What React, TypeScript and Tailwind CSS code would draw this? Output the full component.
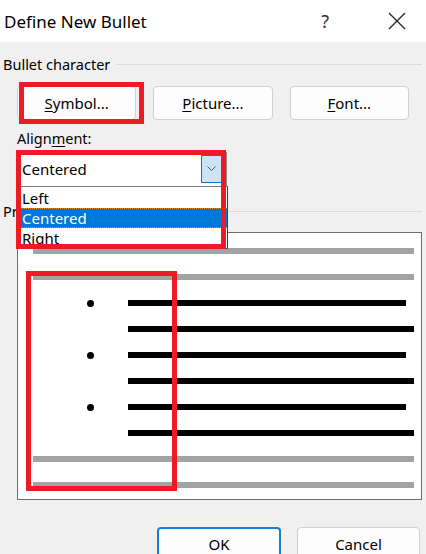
import React from 'react';

const font = "font-['Noto_Sans',sans-serif]";

const GroupHeader = ({ label }: { label: React.ReactNode }) => (
  <div className="flex items-center h-[20px]">
    <span className="pl-[3px] text-[14.5px] leading-[20px] text-black whitespace-nowrap">{label}</span>
    <div className="flex-1 h-px bg-[#dadada] ml-[7px] mr-[4px]"></div>
  </div>
);

const DialogButton = ({ children, primary }: { children: React.ReactNode; primary?: boolean }) => (
  <div
    className={
      primary
        ? 'w-[124px] h-[34px] rounded-[4px] border-2 border-[#1a7fd4] bg-[#fdfdfd] flex items-center justify-center text-[15px] text-black'
        : 'w-[123px] h-[34px] rounded-[4px] border border-[#d0d0d0] bg-[#fdfdfd] flex items-center justify-center text-[15px] text-black'
    }
  >
    {children}
  </div>
);

// one row of the preview: grey filler lines, or black text lines with optional bullet
const PreviewLine = ({ kind, bullet, short }: { kind: 'grey' | 'black'; bullet?: boolean; short?: boolean }) => {
  if (kind === 'grey') {
    return <div className="h-[6px] w-[381px] bg-[#a3a3a3]"></div>;
  }
  return (
    <div className="flex items-center h-[6px]">
      <div className="w-[95px] flex items-center">
        <div className="w-[54px]"></div>
        {bullet && <div className="w-[7px] h-[7px] rounded-full bg-black"></div>}
      </div>
      <div className={short ? 'h-[6px] w-[278px] bg-black' : 'h-[6px] w-[286px] bg-black'}></div>
    </div>
  );
};

export default function App() {
  return (
    <div className={`${font} relative w-[426px] h-[554px] overflow-hidden bg-[#f0f0f0] text-black`}>
      {/* Title bar */}
      <div className="h-[42px] bg-white flex items-center">
        <span className="pl-[4px] text-[17px] leading-none">Define New Bullet</span>
        <div className="flex-1"></div>
        <span className="text-[18px] leading-none text-[#333] mr-[59px]">?</span>
        <svg width="18" height="18" viewBox="0 0 18 18" className="mr-[20px]">
          <path d="M1 1 L17 17 M17 1 L1 17" stroke="#222" strokeWidth="1.3" fill="none" />
        </svg>
      </div>

      {/* Bullet character */}
      <div className="mt-[12px]">
        <GroupHeader label="Bullet character" />
      </div>
      <div className="flex gap-[17px] px-[17px] mt-[12px]">
        <DialogButton>
          <span className="underline underline-offset-2">S</span>ymbol...
        </DialogButton>
        <DialogButton>
          <span className="underline underline-offset-2">P</span>icture...
        </DialogButton>
        <DialogButton>
          <span className="underline underline-offset-2">F</span>ont...
        </DialogButton>
      </div>

      {/* Alignment */}
      <div className="mt-[8px] pl-[17px] text-[14.5px] leading-[20px]">
        Align<span className="underline underline-offset-2">m</span>ent:
      </div>
      <div className="ml-[17px] mt-[4px] w-[210px] h-[34px] bg-white border-x border-[#8a8a8a] flex items-center">
        <span className="pl-[4px] text-[15px] flex-1">Centered</span>
        <div className="w-[21px] h-[28px] mr-[4px] bg-[#cce4f7] border border-[#0078d7] flex items-center justify-center">
          <svg width="9" height="6" viewBox="0 0 9 6">
            <path d="M0.5 0.5 L4.5 4.5 L8.5 0.5" stroke="#555" strokeWidth="1" fill="none" />
          </svg>
        </div>
      </div>

      {/* Preview */}
      <div className="mt-[15px]">
        <GroupHeader label="Preview" />
      </div>
      <div className="ml-[17px] mt-[11px] w-[405px] h-[268px] bg-white border border-[#6d6d6d] pt-[15px] pl-[15px] flex flex-col gap-[20px]">
        <PreviewLine kind="grey" />
        <PreviewLine kind="grey" />
        <PreviewLine kind="black" bullet short />
        <PreviewLine kind="black" />
        <PreviewLine kind="black" bullet short />
        <PreviewLine kind="black" />
        <PreviewLine kind="black" bullet short />
        <PreviewLine kind="black" />
        <PreviewLine kind="grey" />
        <PreviewLine kind="grey" />
      </div>

      {/* OK / Cancel */}
      <div className="flex justify-end gap-[16px] pr-[6px] mt-[27px]">
        <DialogButton primary>OK</DialogButton>
        <DialogButton>Cancel</DialogButton>
      </div>

      {/* Open dropdown list */}
      <div className="absolute left-[17px] top-[186px] w-[211px] h-[63px] bg-white border-t border-[#7a7a7a] border-x border-b border-x-[#8a8a8a] border-b-[#646464] border-r-[#3c3c3c] pt-[1px] text-[15px]">
        <div className="h-[20px] leading-[20px] pl-[4px]">Left</div>
        <div className="h-[20px] leading-[18px] pl-[4px] bg-[#0078d7] text-white border-y border-dotted border-[#e8892e]">Centered</div>
        <div className="h-[20px] leading-[20px] pl-[4px]">Right</div>
      </div>

      {/* Red annotation boxes */}
      <div className="absolute left-[19px] top-[82px] w-[125px] h-[42px] border-[5px] border-[#ed1c24]"></div>
      <div className="absolute left-[16px] top-[150px] w-[210px] h-[99px] border-[5px] border-[#ed1c24]"></div>
      <div className="absolute left-[26px] top-[271px] w-[151px] h-[220px] border-[5px] border-[#ed1c24]"></div>
    </div>
  );
}
